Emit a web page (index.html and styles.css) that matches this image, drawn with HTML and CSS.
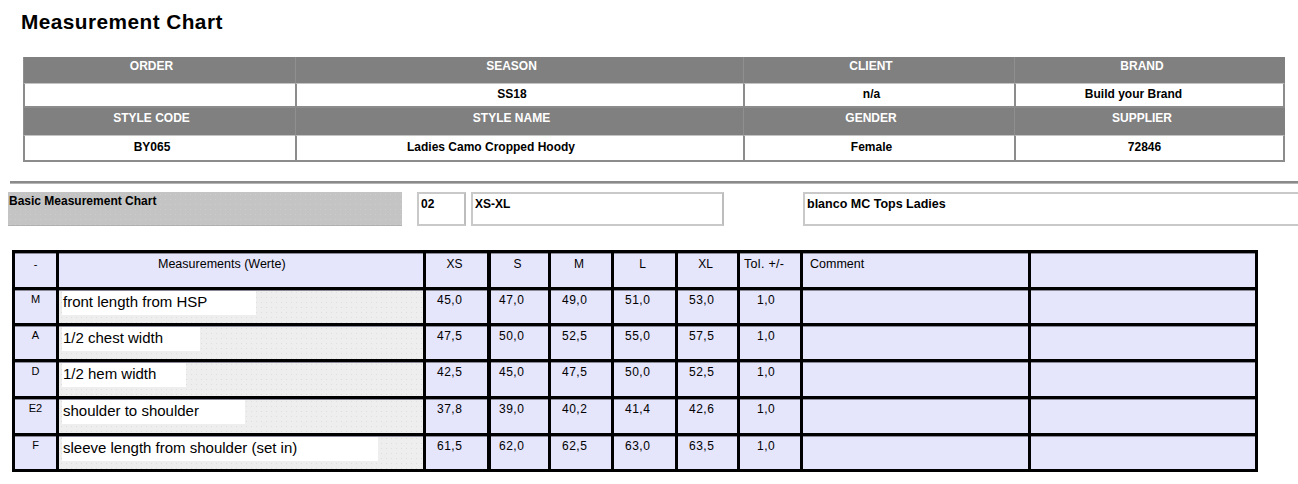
FILE: index.html
```html
<!DOCTYPE html>
<html>
<head>
<meta charset="utf-8">
<title>Measurement Chart</title>
<link rel="stylesheet" href="styles.css">
</head>
<body>
<div class="page">
  <h1 class="title">Measurement Chart</h1>

  <div class="info">
    <div class="ih">ORDER</div>
    <div class="ih">SEASON</div>
    <div class="ih">CLIENT</div>
    <div class="ih">BRAND</div>
    <div class="id r1"></div>
    <div class="id r1">SS18</div>
    <div class="id r1">n/a</div>
    <div class="id r1 last brand">Build your Brand</div>
    <div class="ih h2">STYLE CODE</div>
    <div class="ih h2">STYLE NAME</div>
    <div class="ih h2">GENDER</div>
    <div class="ih h2">SUPPLIER</div>
    <div class="id r2">BY065</div>
    <div class="id r2 sname">Ladies Camo Cropped Hoody</div>
    <div class="id r2">Female</div>
    <div class="id r2 last supp">72846</div>
  </div>

  <div class="rule"></div>

  <div class="meta">
    <div class="chart-name">Basic Measurement Chart</div>
    <div class="box box-no">02</div>
    <div class="box box-range">XS-XL</div>
    <div class="box box-cat">blanco MC Tops Ladies</div>
  </div>

  <div class="grid">
    <div class="c hd lab">-</div>
    <div class="c hd meas-h">Measurements (Werte)</div>
    <div class="c hd sz">XS</div>
    <div class="c hd sz s">S</div>
    <div class="c hd sz">M</div>
    <div class="c hd sz">L</div>
    <div class="c hd sz">XL</div>
    <div class="c hd tol-h">Tol. +/-</div>
    <div class="c hd com-h">Comment</div>
    <div class="c hd"></div>

    <div class="c lab">M</div>
    <div class="c meas"><span class="mbox w1">front length from HSP</span></div>
    <div class="c num">45,0</div>
    <div class="c num s">47,0</div>
    <div class="c num">49,0</div>
    <div class="c num">51,0</div>
    <div class="c num">53,0</div>
    <div class="c tol">1,0</div>
    <div class="c"></div>
    <div class="c"></div>

    <div class="c lab">A</div>
    <div class="c meas"><span class="mbox w2">1/2 chest width</span></div>
    <div class="c num">47,5</div>
    <div class="c num s">50,0</div>
    <div class="c num">52,5</div>
    <div class="c num">55,0</div>
    <div class="c num">57,5</div>
    <div class="c tol">1,0</div>
    <div class="c"></div>
    <div class="c"></div>

    <div class="c lab">D</div>
    <div class="c meas"><span class="mbox w3">1/2 hem width</span></div>
    <div class="c num">42,5</div>
    <div class="c num s">45,0</div>
    <div class="c num">47,5</div>
    <div class="c num">50,0</div>
    <div class="c num">52,5</div>
    <div class="c tol">1,0</div>
    <div class="c"></div>
    <div class="c"></div>

    <div class="c lab">E2</div>
    <div class="c meas"><span class="mbox w4">shoulder to shoulder</span></div>
    <div class="c num">37,8</div>
    <div class="c num s">39,0</div>
    <div class="c num">40,2</div>
    <div class="c num">41,4</div>
    <div class="c num">42,6</div>
    <div class="c tol">1,0</div>
    <div class="c"></div>
    <div class="c"></div>

    <div class="c lab">F</div>
    <div class="c meas"><span class="mbox w5">sleeve length from shoulder (set in)</span></div>
    <div class="c num">61,5</div>
    <div class="c num s">62,0</div>
    <div class="c num">62,5</div>
    <div class="c num">63,0</div>
    <div class="c num">63,5</div>
    <div class="c tol">1,0</div>
    <div class="c"></div>
    <div class="c"></div>
  </div>
</div>
</body>
</html>
```

FILE: styles.css
```css
* { box-sizing: border-box; }

html, body {
  margin: 0;
  padding: 0;
  background: #fff;
}

body {
  font-family: "Liberation Sans", Arial, sans-serif;
  color: #000;
  overflow: hidden;
}

.page {
  width: 1298px;
  height: 484px;
  overflow: hidden;
}

.title {
  margin: 10px 0 0 21px;
  font-size: 20.8px;
  line-height: 24px;
  font-weight: bold;
  letter-spacing: 0.45px;
}

/* header info table */
.info {
  margin: 23px 0 0 23px;
  width: 1262px;
  display: grid;
  grid-template-columns: 272px 448px 271px 271px;
  grid-template-rows: 26px 25px 27px 27px;
  font-size: 12px;
  font-weight: bold;
  line-height: 14px;
  text-align: center;
}

.ih {
  background: #808080;
  color: #fff;
  padding: 2px 16px 0 0;
  border-left: 1px solid #8f8f8f;
}

.ih.h2 {
  padding-top: 3px;
}

.id {
  background: #fff;
  border-left: 2px solid #8c8c8c;
  border-top: 1px solid #c4c4c4;
  border-bottom: 2px solid #8c8c8c;
  padding-right: 16px;
}

.id.r1 { padding-top: 3px; }
.id.r2 { padding-top: 4px; }
.id.last { border-right: 2px solid #8c8c8c; }
.id.brand { padding-right: 32px; }
.id.sname { padding-right: 58px; }
.id.supp { padding-right: 10px; }

.rule {
  margin: 19px 0 0 10px;
  height: 3px;
  background: #8a8a8a;
  border-bottom: 1px solid #b5b5b5;
}

/* meta row */
.meta {
  margin-top: 8px;
  display: flex;
  height: 34px;
  font-weight: bold;
}

.chart-name {
  flex: none;
  width: 394px;
  margin-left: 8px;
  height: 33px;
  background-color: #c4c4c4;
  background-image: radial-gradient(circle, #cdcdcd 0.7px, transparent 0.9px);
  background-size: 5px 5px;
  box-shadow: 0 1px 0 #b0b0b0;
  font-size: 12px;
  line-height: 14px;
  padding: 2px 0 0 1px;
}

.box {
  flex: none;
  background: #fff;
  border: 2px solid #c9c9c9;
  border-right-color: #bdbdbd;
  font-size: 12px;
  line-height: 14px;
  padding: 3px 0 0 2px;
}

.box-no {
  width: 49px;
  margin-left: 15px;
}

.box-range {
  width: 253px;
  margin-left: 5px;
}

.box-cat {
  width: 520px;
  margin-left: 79px;
  font-size: 12.5px;
  padding-top: 3px;
}

/* measurement grid */
.grid {
  margin: 24px 0 0 12px;
  width: 1246px;
  display: grid;
  grid-template-columns: 41px 364px 61px 58px 60px 61px 59px 60px 225px 224px;
  grid-template-rows: 34px 33px 33px 34px 34px 33px;
  gap: 3px;
  padding: 3px;
  background: #000;
  font-size: 12px;
  line-height: 14px;
}

.c {
  background: #e5e5fb;
  box-shadow: inset 0 1px 0 #8a8a96;
}

.c.s {
  border-left: 1px solid #000;
}

.hd {
  padding-top: 4px;
  font-size: 12.5px;
}

.sz {
  text-align: center;
  padding-right: 4px;
  font-size: 12px;
}

.lab {
  text-align: center;
  font-size: 11px;
  line-height: 13px;
  padding-top: 3px;
}

.hd.lab { padding-top: 5px; }

.meas-h {
  padding-left: 99px;
}

.tol-h {
  padding-left: 4px;
  letter-spacing: 0.3px;
}

.com-h {
  padding-left: 7px;
}

.meas {
  background-color: #eeeeee;
  background-image: radial-gradient(circle, #dedede 0.6px, transparent 0.8px);
  background-size: 5px 5px;
  padding: 1px 0 0 3px;
}

.mbox {
  display: block;
  height: 24px;
  background: #fff;
  font-size: 15px;
  line-height: 21px;
  padding-left: 1px;
  white-space: nowrap;
}

.w1 { width: 194px; }
.w2 { width: 138px; }
.w3 { width: 124px; }
.w4 { width: 183px; }
.w5 { width: 316px; }

.num {
  padding: 3px 0 0 11px;
  letter-spacing: 0.5px;
}

.num.s { padding-left: 8px; }

.tol {
  padding: 3px 0 0 17px;
  letter-spacing: 0.5px;
}
```
